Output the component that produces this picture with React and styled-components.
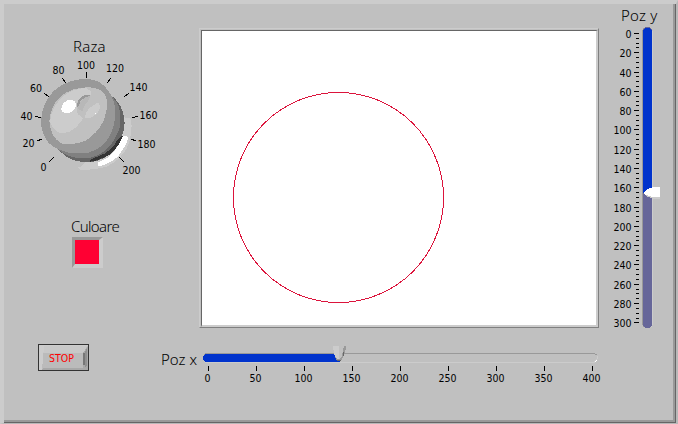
import React from "react";
import styled, { createGlobalStyle } from "styled-components";

const Global = createGlobalStyle`
  * { box-sizing: border-box; }
  body { margin: 0; background: #c0c0c0; }
  svg { display: block; }
`;

const tickFont = `"DejaVu Sans Condensed", "DejaVu Sans", sans-serif`;
const titleFont = `"Noto Sans", "Open Sans", sans-serif`;

const Panel = styled.main`
  width: 678px;
  height: 424px;
  background: #c0c0c0;
  border: 4px solid;
  border-color: #cccccc #b8b8b8 #b8b8b8 #cccccc;
  border-right-width: 2px;
  border-bottom-width: 1px;
  overflow: hidden;
`;

const Surface = styled.div`
  height: 419px;
  box-shadow: inset -1px -1px 0 #666666, inset -3px -3px 0 #999999;
`;

const Upper = styled.div`
  display: flex;
  height: 324px;
`;

const Controls = styled.section`
  width: 195px;
  padding-top: 32px;
`;

const Title = styled.div`
  font-family: ${titleFont};
  font-size: 15px;
  font-weight: 300;
  line-height: 20px;
  letter-spacing: ${(p) => p.$tracking || 0}px;
  color: #000;
  white-space: nowrap;
  margin-left: ${(p) => p.$left || 0}px;
`;

const KnobSvg = styled.svg`
  margin-top: 2px;
  margin-left: 10px;
  text { font-family: ${tickFont}; font-size: 10.5px; text-anchor: middle; }
`;

const ColourBox = styled.div`
  padding-top: 33px;
`;

const Swatch = styled.div`
  width: 31px;
  height: 31px;
  margin: 1px 0 0 68px;
  border: 3px solid;
  border-color: #999 #ccc #ccc #999;
  border-right-width: 4px;
  border-bottom-width: 4px;
  background: #ff0033;
`;

const Graph = styled.section`
  width: 400px;
  height: 300px;
  margin-top: 24px;
  border: 1px solid;
  border-color: #ccc #808080 #808080 #ccc;
  padding: 1px 0 0 1px;
`;

const Plot = styled.div`
  width: 397px;
  height: 297px;
  border: 1px solid;
  border-color: #666 #ccc #ccc #666;
  border-right-width: 2px;
  border-bottom-width: 2px;
  background: #fff;
`;

const Vertical = styled.section`
  width: 73px;
  padding-top: 1px;
`;

const VerticalSvg = styled.svg`
  margin-top: 2px;
  margin-left: 4px;
  text { font-family: ${tickFont}; font-size: 10.5px; text-anchor: end; }
`;

const Lower = styled.div`
  display: flex;
  height: 80px;
`;

const Stop = styled.button`
  display: grid;
  width: 51px;
  height: 27px;
  margin: 16px 0 0 34px;
  padding: 0;
  border: 1px solid #333;
  background: #bbb;
  font-family: ${tickFont};
  font-size: 10.5px;
  color: #f00;
  svg, span { grid-area: 1 / 1; }
  span { place-self: center start; padding: 1px 0 0 10px; }
`;

const Caption = styled.div`
  width: 39px;
  margin: 21px 0 0 72px;
`;

const HorizontalSvg = styled.svg`
  margin-top: 16px;
  text { font-family: ${tickFont}; font-size: 10.5px; text-anchor: middle; }
`;

const knobTicks = [
  ["0", 43.5, 171, 54, 157, 49, 162],
  ["20", 28.5, 147, 42, 139, 37, 141],
  ["40", 26.5, 120, 41, 118, 35, 116],
  ["60", 36, 92, 49, 97, 44, 93],
  ["80", 58.5, 74, 66, 83, 62, 78],
  ["100", 86, 69, 86.5, 78, 86.5, 72],
  ["120", 115, 72, 107, 83, 111, 78],
  ["140", 138.5, 91, 124, 97, 129, 93],
  ["160", 148.5, 119, 132, 118, 138, 116],
  ["180", 146.5, 148, 131, 139, 136, 141],
  ["200", 131.5, 174, 119, 157, 124, 162],
];

const knobLayers = [
  ["#ccc", "M270 140L303 146Q310 190 290 236Q268 272 230 290Q190 301 150 300L144 293Q155 291 165 276Z"],
  ["#fff", "M276 197L295 200Q293 222 264 259Q238 283 205 289L204 277L235 262Q262 240 276 197Z"],
  ["#666", "M236 70Q262 90 272 110Q283 132 284 160Q280 205 255 238Q225 270 185 276Q145 280 110 261L82 237L150 150Z"],
  ["#333", "M280 195Q268 228 243 251Q215 269 178 276Q180 266 208 258Q246 244 264 207Z"],
  ["#808080", "M236 70Q260 92 267 112Q275 140 269 172Q258 210 230 238Q202 263 164 265Q125 265 100 250L82 237L150 150Z"],
  ["#999", "M170 27Q212 28 235 62Q256 92 256 130Q255 170 235 205Q213 237 175 248Q128 255 97 242Q64 233 48 208Q34 185 33 155Q34 105 68 66Q110 27 170 27Z"],
  ["#c0c0c0", "M58 154Q60 110 91 80Q128 50 180 52Q223 56 230 87Q235 118 219 156Q200 192 165 213Q128 227 94 220Q62 202 58 154Z"],
  ["#ccc", "M60 154Q65 108 102 77Q128 56 168 54L184 64L182 74Q160 74 144 92Q136 112 143 132L160 145L140 170Q122 189 92 190Q67 181 60 154Z"],
  ["#999", "M140 112Q140 92 155 80Q168 72 182 75L176 82Q160 82 151 94L146 112Z"],
  ["#b8b8b8", "M144 112Q151 91 168 80L180 79Q177 94 165 105L157 123Q147 122 144 112Z"],
  ["#ccc", "M164 143Q168 120 188 107L203 98Q214 105 207 122Q196 139 176 145Z"],
];

function Knob() {
  return (
    <KnobSvg width="160" height="125" viewBox="14 58 160 125" role="img" aria-label="Raza">
      <g transform="translate(30 70) scale(0.33333)" shapeRendering="crispEdges">
        {knobLayers.map(([fill, d], i) => <path key={i} fill={fill} d={d} />)}
        <ellipse cx="116" cy="110" rx="24" ry="18" transform="rotate(-38 116 110)" fill="#fff" />
        <rect x="195" y="129" width="3" height="3" fill="#fff" />
      </g>
      {knobTicks.map(([label, x, y, x1, y1, x2, y2]) => (
        <React.Fragment key={label}>
          <text x={x} y={y}>{label}</text>
          <line x1={x1} y1={y1} x2={x2} y2={y2} stroke="#000" shapeRendering="crispEdges" />
        </React.Fragment>
      ))}
    </KnobSvg>
  );
}

function VerticalSlider() {
  const y = (v) => Math.round(33 + v * 0.9645);
  return (
    <VerticalSvg width="66" height="304" viewBox="603 27 66 304" shapeRendering="crispEdges">
      {Array.from({ length: 61 }, (_, i) => i * 5).map((v) => {
        const major = v % 20 === 0;
        return (
          <g key={v}>
            <rect x={major ? 634 : 636} y={y(v)} width={major ? 5 : 3} height="1" />
            {major && <text x="631.5" y={y(v) + 5}>{v}</text>}
          </g>
        );
      })}
      <rect x="642" y="27" width="10" height="301" rx="5" fill="#999" />
      <rect x="643" y="28" width="10" height="300" rx="5" fill="#ccc" />
      <rect x="643" y="27" width="9" height="301" rx="4" fill="#666699" />
      <path d="M643 193V31L645 28H650L652 31V193Z" fill="#0033cc" />
      <path d="M645 195H660V199H655L648 197Z" fill="#ccc" />
      <path d="M643 193L646 190L653 187H660V197H653L646 195Z" fill="#fff" />
    </VerticalSvg>
  );
}

function HorizontalSlider() {
  return (
    <HorizontalSvg width="402" height="45" viewBox="200 344 402 45" shapeRendering="crispEdges">
      <path d="M204 355L206 353.5H594L597 355" fill="none" stroke="#999" />
      <path d="M205 362.5H594L597 359V356" fill="none" stroke="#ccc" />
      <path d="M595 361h1v1h-1zM596 360h1v1h-1z" fill="#fff" />
      <path d="M203 356L206 354H340V362H206L203 360Z" fill="#0033cc" />
      <path d="M333 346H346V349L343 357L341 361H337L334 354Z" fill="#999" />
      <path d="M333 346H339L340 358L337 359L334 354Z" fill="#ccc" />
      <path d="M339 346H344L342 356L339 359Z" fill="#c0c0c0" />
      <path d="M343 352h1v4h-1zM337 360h4v1h-4z" fill="#666" />
      {Array.from({ length: 9 }, (_, i) => (
        <g key={i}>
          <rect x={208 + i * 48} y="366" width="1" height="5" />
          <text x={207.5 + i * 48} y="382">{i * 50}</text>
        </g>
      ))}
    </HorizontalSvg>
  );
}

function StopButton() {
  return (
    <Stop>
      <svg width="49" height="25" viewBox="0 0 49 25" shapeRendering="crispEdges">
        <path d="M0 0H49L44 8H0Z" fill="#c8c8c8" />
        <path d="M0 0H49V1H5L3 25H0Z" fill="#ccc" />
        <path d="M49 1V25H2L4 23H44V8Z" fill="#a8a8a8" />
        <path d="M48 3V21L46 22V7Z" fill="#909090" />
        <path d="M44 8h2v12h-2z" fill="#777" />
      </svg>
      <span>STOP</span>
    </Stop>
  );
}

export default function App() {
  return (
    <>
      <Global />
      <Panel>
        <Surface>
          <Upper>
            <Controls>
              <Title $left={69} $tracking={0.2}>Raza</Title>
              <Knob />
              <ColourBox>
                <Title $left={67} $tracking={-0.65}>Culoare</Title>
                <Swatch />
              </ColourBox>
            </Controls>
            <Graph>
              <Plot>
                <svg width="394" height="294" viewBox="202 31 394 294">
                  <circle cx="338.5" cy="197.5" r="105" fill="none" stroke="#dc143c" shapeRendering="crispEdges" />
                </svg>
              </Plot>
            </Graph>
            <Vertical>
              <Title $left={22} $tracking={0.2}>Poz y</Title>
              <VerticalSlider />
            </Vertical>
          </Upper>
          <Lower>
            <StopButton />
            <Caption><Title>Poz x</Title></Caption>
            <HorizontalSlider />
          </Lower>
        </Surface>
      </Panel>
    </>
  );
}
